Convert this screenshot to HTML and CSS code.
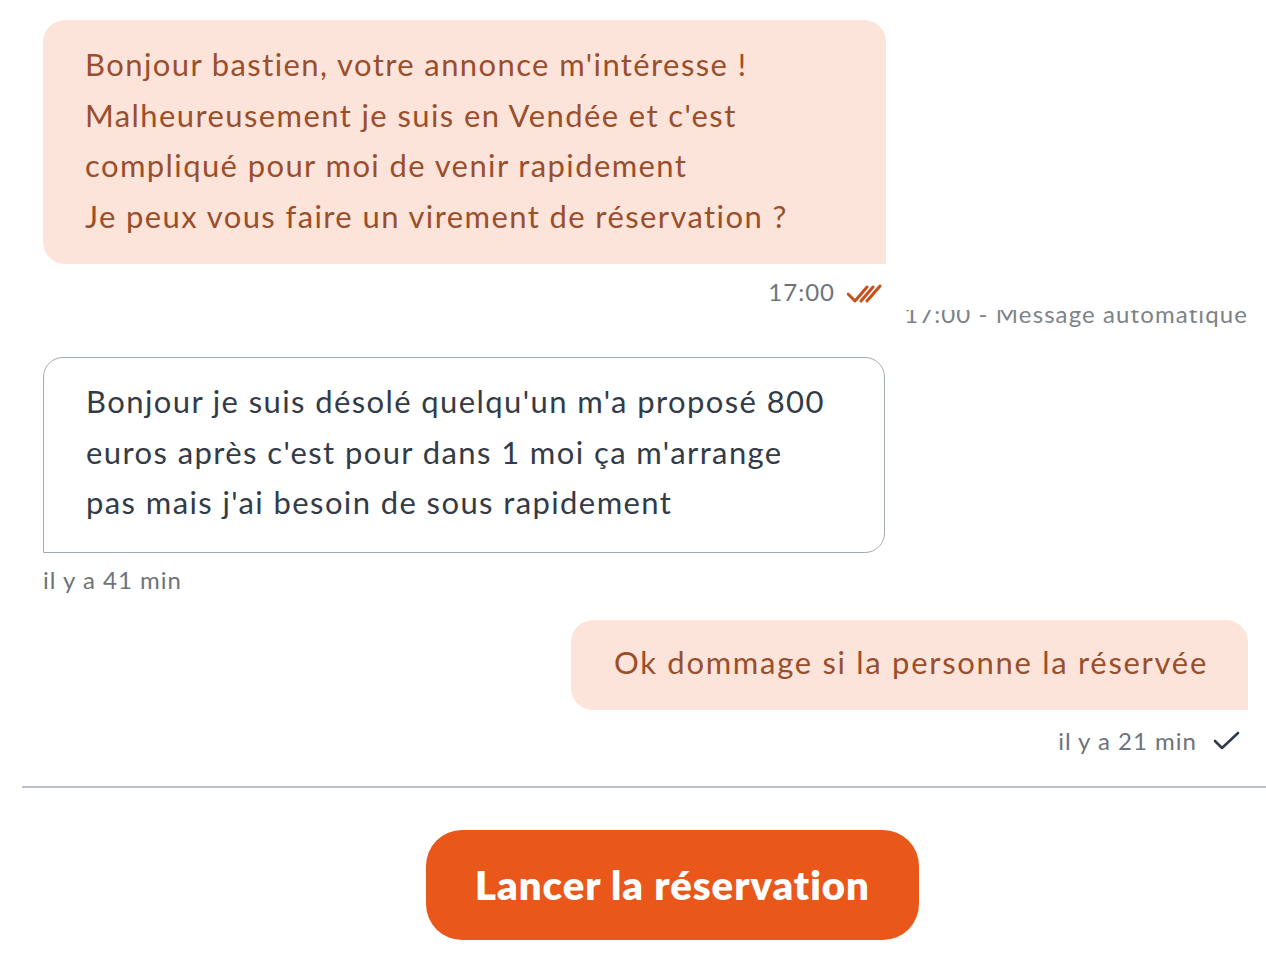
FILE: index.html
```html
<!DOCTYPE html>
<html lang="fr">
<head>
    <meta charset="UTF-8">
    <meta name="viewport" content="width=device-width, initial-scale=1.0">
    <title>Messagerie</title>
    <link rel="stylesheet" href="styles.css">
</head>
<body>
    <div class="chat">
        <div class="thread">
            <div class="msg msg-sent msg-wide">
                <div class="bubble bubble-sent">
                    Bonjour bastien, votre annonce m'intéresse !<br>
                    Malheureusement je suis en Vendée et c'est<br>
                    compliqué pour moi de venir rapidement<br>
                    Je peux vous faire un virement de réservation ?
                </div>
                <div class="meta meta-right">
                    <span>17:00</span>
                    <svg class="tick-double" width="36" height="22" viewBox="0 0 36 22" fill="none" stroke="#c8501c" stroke-width="3" stroke-linecap="round" stroke-linejoin="round">
                        <path d="M1 12 L8 19 L20 5"/>
                        <path d="M14 19 L26 5"/>
                        <path d="M20 19 L33 4"/>
                    </svg>
                </div>
            </div>

            <div class="auto-note">
                <span>17:00 - Message automatique</span>
            </div>

            <div class="msg msg-received">
                <div class="bubble bubble-received">
                    Bonjour je suis désolé quelqu'un m'a proposé 800<br>
                    euros après c'est pour dans 1 moi ça m'arrange<br>
                    pas mais j'ai besoin de sous rapidement
                </div>
                <div class="meta">il y a 41 min</div>
            </div>

            <div class="msg msg-sent msg-last">
                <div class="bubble bubble-sent bubble-short">
                    Ok dommage si la personne la réservée
                </div>
                <div class="meta meta-right">
                    <span>il y a 21 min</span>
                    <svg class="tick" width="32" height="22" viewBox="0 0 32 22" fill="none" stroke="#2f3a4a" stroke-width="2.6" stroke-linecap="round" stroke-linejoin="round">
                        <path d="M4 11 L11 18 L27 3"/>
                    </svg>
                </div>
            </div>
        </div>

        <div class="footer">
            <button class="btn-book">Lancer la réservation</button>
        </div>
    </div>
</body>
</html>
```

FILE: styles.css
```css
body {
    margin: 0;
    font-family: 'Lato', 'Open Sans', sans-serif;
    background-color: #ffffff;
    color: #333b48;
}
.chat {
    width: 1266px;
    height: 954px;
    overflow: hidden;
}
.thread {
    padding: 20px 18px 0 43px;
    display: flex;
    flex-direction: column;
}
.msg {
    display: flex;
    flex-direction: column;
}
.msg-sent {
    align-items: flex-end;
}
.msg-wide {
    width: 843px;
}
.msg-received {
    width: 842px;
}
.msg-last {
    margin-top: 25px;
}
.bubble {
    font-size: 31px;
    letter-spacing: 1.4px;
    line-height: 50.5px;
    box-sizing: border-box;
}
.bubble-sent {
    background-color: #fde4da;
    color: #9a4f2c;
    border-radius: 22px 22px 0 22px;
    padding: 19px 42px 23px 42px;
    width: 100%;
}
.bubble-short {
    width: auto;
    letter-spacing: 1.7px;
    padding: 17px 40px 23px 43px;
}
.bubble-received {
    background-color: #ffffff;
    border: 1.5px solid #a3abba;
    border-radius: 20px 20px 20px 0;
    padding: 18px 40px 24px 42px;
    color: #333b48;
}
.meta {
    font-size: 24px;
    letter-spacing: 1px;
    line-height: 30px;
    color: #6e737b;
    margin-top: 12px;
}
.meta-right {
    display: flex;
    align-items: center;
    gap: 12px;
    margin-top: 13px;
    padding-right: 3px;
}
.msg-last .meta-right {
    margin-top: 16px;
    padding-right: 5px;
    gap: 14px;
}
.tick-double {
    margin-top: 2px;
}
.auto-note {
    align-self: flex-end;
    height: 19px;
    margin-top: 3px;
    overflow: hidden;
    margin-bottom: 28px;
}
.auto-note span {
    display: block;
    margin-top: -11px;
    font-size: 24px;
    letter-spacing: 1.1px;
    line-height: 30px;
    color: #7d8288;
}
.footer {
    margin: 30px 0 0 22px;
    border-top: 2px solid #bcc3cf;
    padding: 42px 0 0 404px;
}
.btn-book {
    width: 493px;
    height: 110px;
    border: none;
    border-radius: 36px;
    background-color: #e9581a;
    color: #ffffff;
    font-family: 'Lato', 'Open Sans', sans-serif;
    font-size: 40px;
    letter-spacing: 1px;
    font-weight: 800;
    cursor: pointer;
}
```
